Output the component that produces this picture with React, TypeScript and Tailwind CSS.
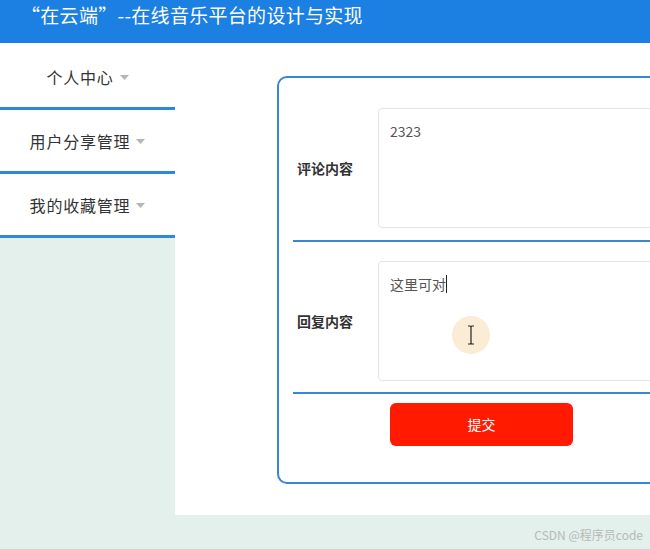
import React from "react";

const font = { fontFamily: '"Noto Sans CJK SC", "Noto Sans", sans-serif' };

function MenuItem({ label, first }: { label: string; first?: boolean }) {
  return (
    <div
      className={`flex items-center justify-center bg-white border-b-[3px] border-[#2f87dd] ${first ? "h-[67px] pt-[4px]" : "h-[64px]"}`}
    >
      <span className="text-[16px] text-[#333] tracking-[0.8px]">{label}</span>
      <svg width="9" height="5" viewBox="0 0 9 5" className="ml-[6px] mt-[1px]">
        <path d="M0 0 L9 0 L4.5 5 Z" fill="#b5b5b5" />
      </svg>
    </div>
  );
}

export default function App() {
  return (
    <div className="w-[650px] h-[549px] overflow-hidden flex flex-col bg-[#e3f0ec]" style={font}>
      <div className="h-[43px] bg-[#1b80e2] shrink-0 flex items-start pl-[21px] pt-[2px]">
        <span className="text-white text-[19px] leading-[26px] tracking-[0.3px]">“在云端”--在线音乐平台的设计与实现</span>
      </div>
      <div className="flex flex-1 min-h-0">
        <div className="w-[175px] shrink-0 flex flex-col">
          <MenuItem label="个人中心" first />
          <MenuItem label="用户分享管理" />
          <MenuItem label="我的收藏管理" />
        </div>
        <div className="flex-1 flex flex-col min-w-0">
          <div className="h-[472px] bg-white pl-[102px] pt-[33px] overflow-hidden">
            <div className="w-[520px] h-[408px] border-2 border-[#3787d6] rounded-[10px] pl-[14px] pt-[30px] relative">
              <div className="flex items-center">
                <div className="w-[85px] pl-[4px] text-[14px] font-bold text-[#333]">评论内容</div>
                <div className="flex-1 h-[120px] border border-[#e4e4e4] rounded-[4px] px-[11px] pt-[11px] text-[14px] text-[#555] leading-[22px]">
                  2323
                </div>
              </div>
              <div className="mt-[12px] h-[2px] bg-[#3787d6]" />
              <div className="flex items-center mt-[19px]">
                <div className="w-[85px] pl-[4px] text-[14px] font-bold text-[#333]">回复内容</div>
                <div className="flex-1 h-[120px] border border-[#e4e4e4] rounded-[4px] px-[11px] pt-[11px] text-[14px] text-[#555] leading-[22px] flex items-start">
                  <span>这里可对</span>
                  <span className="inline-block w-[1px] h-[18px] bg-[#222] mt-[2px]" />
                </div>
              </div>
              <div className="mt-[11px] h-[2px] bg-[#3787d6]" />
              <div className="mt-[9px] pl-[97px]">
                <button className="w-[183px] h-[43px] rounded-[6px] bg-[#ff1a00] text-white text-[14px]">
                  提交
                </button>
              </div>
              <div className="absolute left-[173px] top-[238px] w-[38px] h-[38px] rounded-full bg-[#fbecd5] flex items-center justify-center">
                <svg width="8" height="20" viewBox="0 0 8 20">
                  <path d="M1 1 H3 Q4 1 4 2 V18 Q4 19 3 19 H1 M7 1 H5 Q4 1 4 2 M4 18 Q4 19 5 19 H7" stroke="#222" strokeWidth="1.2" fill="none" />
                </svg>
              </div>
            </div>
          </div>
          <div className="flex-1 flex items-center justify-end pr-[7px] pt-[6px]">
            <span className="text-[12px] text-[#b8b8b8]">CSDN @程序员code</span>
          </div>
        </div>
      </div>
    </div>
  );
}
